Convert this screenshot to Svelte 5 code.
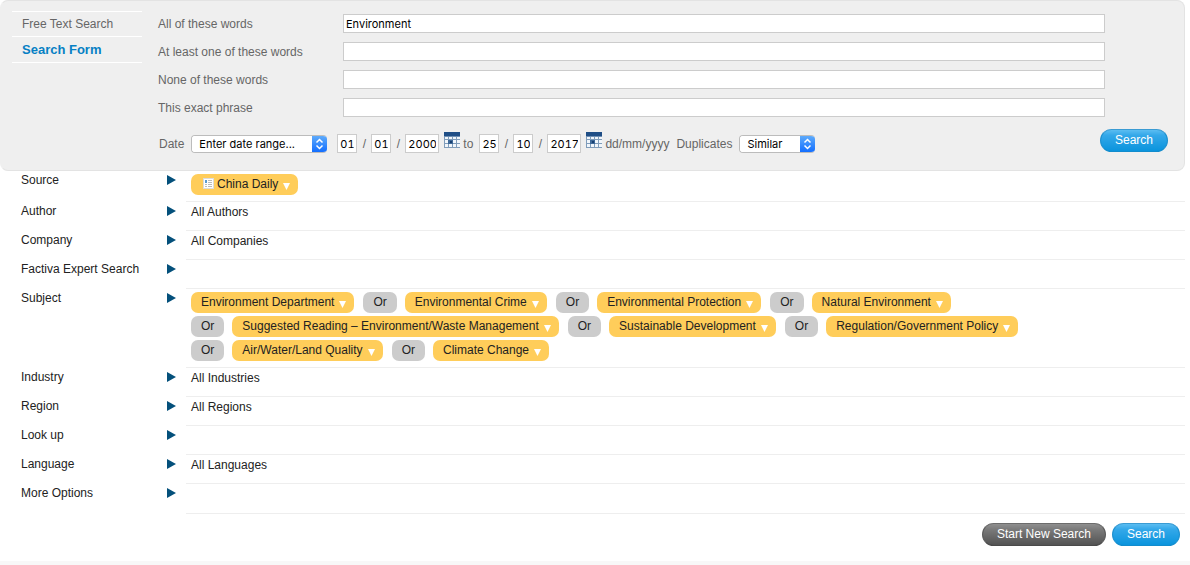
<script>
  const words = [
    { id: 'all', label: 'All of these words', value: 'Environment' },
    { id: 'any', label: 'At least one of these words', value: '' },
    { id: 'none', label: 'None of these words', value: '' },
    { id: 'exact', label: 'This exact phrase', value: '' }
  ];

  const dates = [
    { id: 'from', name: 'From', parts: [['day', '01'], ['month', '01'], ['year', '2000']] },
    { id: 'to', name: 'To', parts: [['day', '25'], ['month', '10'], ['year', '2017']] }
  ];

  const filters = [
    { name: 'Source', terms: ['China Daily'], icon: true },
    { name: 'Author', text: 'All Authors' },
    { name: 'Company', text: 'All Companies' },
    { name: 'Factiva Expert Search' },
    {
      name: 'Subject',
      terms: [
        'Environment Department',
        'Environmental Crime',
        'Environmental Protection',
        'Natural Environment',
        'Suggested Reading – Environment/Waste Management',
        'Sustainable Development',
        'Regulation/Government Policy',
        'Air/Water/Land Quality',
        'Climate Change'
      ]
    },
    { name: 'Industry', text: 'All Industries' },
    { name: 'Region', text: 'All Regions' },
    { name: 'Look up' },
    { name: 'Language', text: 'All Languages' },
    { name: 'More Options' }
  ];
</script>

{#snippet calendar()}
  <svg width="16" height="16" viewBox="0 0 16 16" shape-rendering="crispEdges" aria-hidden="true">
    <rect width="16" height="16" fill="#f1f6fb" />
    <rect width="16" height="4" fill="#1f4e86" />
    <path d="M0 4.5H16" stroke="#6f8fb3" />
    <path d="M0 7.5H16M0 11.5H16M0 15.5H16M.5 5V16M4.5 5V16M8.5 5V16M12.5 5V16" stroke="#7f9cba" fill="none" />
    <rect x="4" y="8" width="5" height="4" fill="#3d6898" />
    <rect x="6" y="9" width="2" height="2" fill="#173f70" />
  </svg>
{/snippet}

{#snippet arrows()}
  <span class="arrows">
    <svg width="9" height="12" viewBox="0 0 9 12" aria-hidden="true">
      <path d="M1.5 4.5L4.5 1.5L7.5 4.5M1.5 7.5L4.5 10.5L7.5 7.5" fill="none" stroke="#fff" stroke-width="1.5" />
    </svg>
  </span>
{/snippet}

<main>
  <form class="panel" onsubmit={(e) => e.preventDefault()}>
    <nav>
      <a href="#free">Free Text Search</a>
      <a href="#form" class="active">Search Form</a>
    </nav>

    <div class="fields">
      {#each words as w}
        <div class="word">
          <label for={w.id}>{w.label}</label>
          <input id={w.id} type="text" value={w.value} />
        </div>
      {/each}

      <div class="dates">
        <label for="range">Date</label>
        <span class="select range">
          <select id="range"><option>Enter date range...</option></select>
          {@render arrows()}
        </span>
        {#each dates as d, i}
          {#if i}<span class="to">to</span>{/if}
          <span class="date">
            {#each d.parts as [part, value], j}
              {#if j}<span class="slash">/</span>{/if}
              <input class={part} type="text" aria-label="{d.name} {part}" {value} />
            {/each}
          </span>
          <button type="button" class="cal" aria-label="{d.name} calendar">{@render calendar()}</button>
        {/each}
        <span class="format">dd/mm/yyyy</span>
        <label class="dup" for="duplicates">Duplicates</label>
        <span class="select similar">
          <select id="duplicates"><option>Similar</option></select>
          {@render arrows()}
        </span>
        <button class="pill-button blue">Search</button>
      </div>
    </div>
  </form>

  <section class="filters">
    {#each filters as f}
      <div class="row">
        <button type="button" class="name">
          {f.name}
          <svg width="9" height="10" viewBox="0 0 9 10" aria-hidden="true"><path d="M0 0L9 5L0 10Z" fill="#04507b" /></svg>
        </button>
        <div class="value">
          {#if f.terms}
            <div class="terms">
              {#each f.terms as term, i}
                <span class="pair">
                  {#if i}<span class="or">Or</span>{/if}
                  <button type="button" class="term" class:with-icon={f.icon}>
                    {#if f.icon}
                      <svg class="doc" width="11" height="11" viewBox="0 0 11 11" shape-rendering="crispEdges" aria-hidden="true">
                        <rect x=".5" y=".5" width="10" height="10" fill="#fff" stroke="#dcdcdc" />
                        <rect x="2" y="2" width="2" height="3" fill="#5a9bd0" />
                        <path d="M5 2.5H9M5 4.5H9M2 6.5H4M5 6.5H9M2 8.5H4M5 8.5H9" stroke="#bbb" />
                      </svg>
                    {/if}
                    {term}
                    <svg class="caret" width="7" height="7" viewBox="0 0 7 7" aria-hidden="true"><path d="M0 0H7L3.5 7Z" fill="#fff" /></svg>
                  </button>
                </span>
              {/each}
            </div>
          {:else if f.text}
            <span class="text">{f.text}</span>
          {/if}
        </div>
      </div>
    {/each}
  </section>

  <div class="actions">
    <button type="button" class="pill-button gray">Start New Search</button>
    <button type="button" class="pill-button blue">Search</button>
  </div>
</main>
<footer></footer>

<style>
  :global(body) {
    margin: 0;
    background: #fff;
  }
  main {
    margin-right: 5px;
    color: #222;
    font: 12px/16px "Liberation Sans", Arial, sans-serif;
  }
  main *, footer {
    box-sizing: border-box;
  }
  button, input, select {
    margin: 0;
    font: inherit;
    color: inherit;
  }
  button {
    border: 0;
    padding: 0;
    background: none;
    cursor: pointer;
  }
  svg {
    display: block;
    flex: none;
  }
  .panel {
    display: flex;
    gap: 16px;
    padding: 10px 16px 15px 11px;
    border: 1px solid #e3e3e3;
    border-left-color: #efefef;
    border-radius: 8px;
    background: #efefef;
    color: #666;
  }
  nav {
    flex: none;
    width: 130px;
    align-self: flex-start;
    border-top: 1px solid #fff;
  }
  nav a {
    display: block;
    padding: 4px 10px;
    border-bottom: 1px solid #fff;
    color: #666;
    text-decoration: none;
  }
  nav a.active {
    padding-top: 5px;
    color: #0680c4;
    font-size: 13px;
    font-weight: bold;
  }
  .fields {
    flex: 1;
    min-width: 0;
    padding-top: 3px;
  }
  .word {
    display: flex;
    align-items: center;
    height: 19px;
    margin: 0 63px 9px 0;
  }
  .word label {
    flex: none;
    width: 185px;
  }
  input {
    height: 19px;
    padding: 0 2px;
    border: 1px solid #ccc;
    border-radius: 0;
    background: #fff;
    color: #000;
    font: 11px "Inter", sans-serif;
    font-variant-numeric: tabular-nums;
  }
  .word input {
    flex: 1;
    min-width: 0;
  }
  .dates {
    display: flex;
    align-items: center;
    height: 23px;
    margin-top: 15px;
    padding-left: 1px;
    white-space: nowrap;
  }
  .select {
    display: flex;
    flex: none;
    height: 18px;
    margin-left: 7px;
    border: 1px solid #bcbcbc;
    border-right: 0;
    border-radius: 4px;
    background: #fff;
    overflow: hidden;
  }
  .range {
    width: 136px;
    margin-right: 10px;
  }
  .similar {
    width: 76px;
  }
  select {
    flex: 1;
    min-width: 0;
    appearance: none;
    border: 0;
    padding: 0 0 0 7px;
    background: #fff;
    color: #000;
    font: 11px "Inter", sans-serif;
  }
  .arrows {
    display: flex;
    align-items: center;
    justify-content: center;
    flex: none;
    width: 15px;
    margin: -1px 0;
    background: linear-gradient(#62aefb, #0f6bff);
    pointer-events: none;
  }
  .date {
    display: flex;
    align-items: center;
  }
  .day, .month {
    width: 20px;
  }
  .year {
    width: 34px;
  }
  .slash {
    width: 14px;
    text-align: center;
  }
  .cal {
    margin: 0 3px 8px 5px;
  }
  .to {
    margin-right: 6px;
  }
  .dup {
    margin-left: 7px;
  }
  .pill-button {
    height: 23px;
    padding: 0 14px 1px;
    border-radius: 12px;
    color: #fff;
    white-space: nowrap;
  }
  .dates .pill-button {
    align-self: flex-start;
    margin: -3px 0 0 auto;
  }
  .blue {
    border: 1px solid;
    border-color: #3a9bd3 #1b8fce #128ccd;
    background: linear-gradient(#5bbdf1, #34a8e9 25%, #0a94dd);
  }
  .gray {
    border: 1px solid;
    border-color: #6c6c6c #5a5a5a #4a4a4a;
    background: linear-gradient(#8f8f8f, #7b7b7b 25%, #535353);
  }
  .row {
    display: flex;
  }
  .name {
    display: flex;
    align-items: center;
    justify-content: space-between;
    flex: none;
    width: 176px;
    height: 16px;
    margin: 1px 10px 0 0;
    padding-left: 21px;
    text-align: left;
  }
  .value {
    flex: 1;
    min-width: 0;
    min-height: 29px;
    padding: 2px 0 6px 5px;
    border-bottom: 1px solid #eee;
  }
  .row:last-child .value {
    min-height: 30px;
  }
  .text {
    display: block;
  }
  .terms {
    display: flex;
    flex-wrap: wrap;
    gap: 3px 9px;
    padding-top: 1px;
  }
  .pair {
    display: flex;
    gap: 8px;
  }
  .or, .term {
    display: flex;
    align-items: center;
    height: 21px;
    padding: 0 10px 1px;
    border-radius: 7px;
    background: #ccc;
    white-space: nowrap;
  }
  .term {
    gap: 5px;
    padding-right: 8px;
    background: #ffcd5a;
  }
  .with-icon {
    padding-left: 12px;
  }
  .doc {
    margin: 0 -2px 2px 0;
  }
  .caret {
    margin-top: 4px;
  }
  .actions {
    display: flex;
    justify-content: flex-end;
    gap: 6px;
    padding: 9px 5px 15px;
  }
  footer {
    height: 4px;
    background: #f8f8f8;
  }
</style>
